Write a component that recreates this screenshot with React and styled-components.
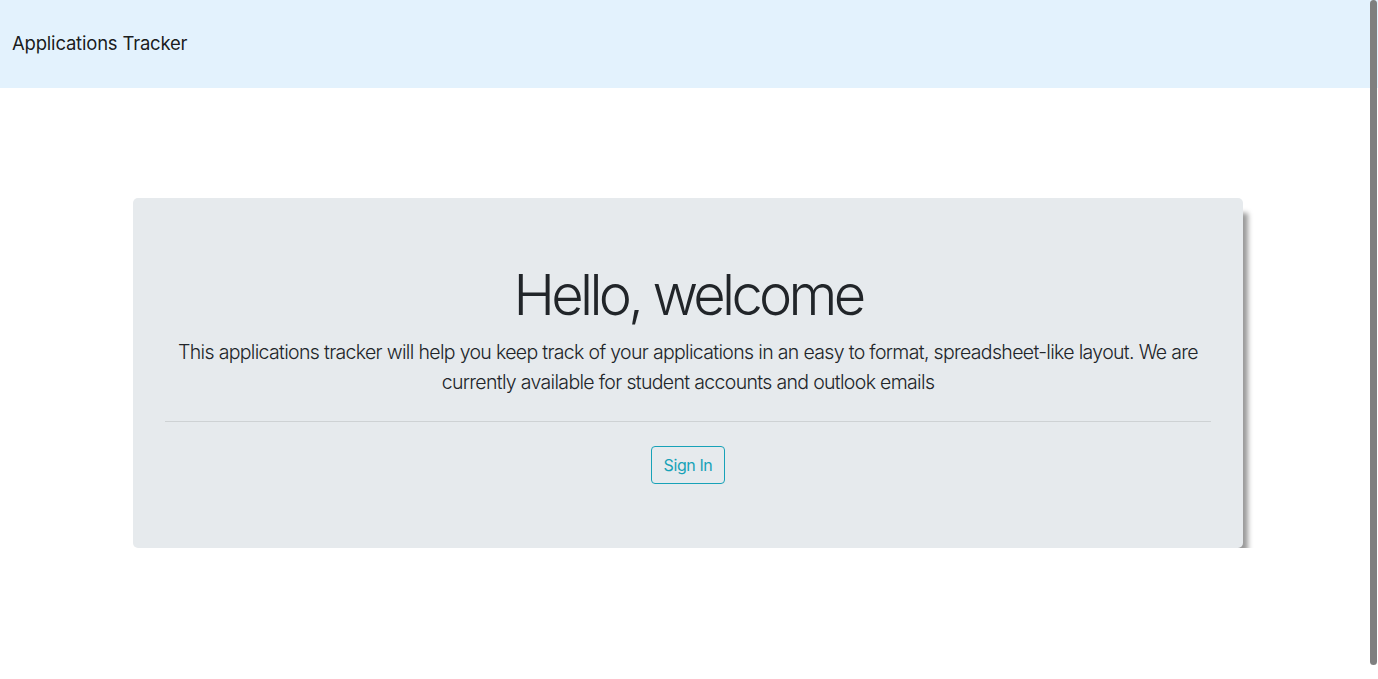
import styled, { createGlobalStyle } from 'styled-components'

export default function App() {
  return (
    <>
      <GlobalStyle />
      <NavBar>
        <Brand href="#">Applications Tracker</Brand>
      </NavBar>

      <Container>
        <Jumbotron>
          <Title>Hello, welcome</Title>
          <Lead>
            This applications tracker will help you keep track of your applications in an easy to
            format, spreadsheet-like layout. We are currently available for student accounts and
            outlook emails
          </Lead>
          <Divider />
          <OutlineButton type="button">Sign In</OutlineButton>
        </Jumbotron>
      </Container>

      <ScrollThumb />
    </>
  )
}

const GlobalStyle = createGlobalStyle`
  html, body {
    margin: 0;
    padding: 0;
    background: #fff;
    overflow: hidden;
  }
  body {
    font-family: Inter, "Noto Sans", "Liberation Sans", sans-serif;
    color: #212529;
  }
  * {
    box-sizing: border-box;
  }
`

const NavBar = styled.nav`
  height: 88px;
  background: #e3f2fd;
  display: flex;
  align-items: center;
  padding: 0 12px;
`

const Brand = styled.a`
  font-size: 18.5px;
  letter-spacing: -0.2px;
  color: rgba(0, 0, 0, 0.9);
  text-decoration: none;
  line-height: 30px;
  padding-bottom: 2px;
`

const Container = styled.main`
  max-width: 1140px;
  margin: 110px auto 0;
  padding: 0 16px 0 14px;
`

const Jumbotron = styled.section`
  background: #e6eaed;
  border-radius: 5px;
  padding: 64px 32px;
  text-align: center;
  box-shadow: 10px 10px 5px -5px rgba(0, 0, 0, 0.4);
`

const Title = styled.h1`
  margin: 0 0 8px;
  font-size: 56px;
  font-weight: 300;
  line-height: 67px;
  letter-spacing: -3.7px;
  color: #212529;
`

const Lead = styled.p`
  margin: 0;
  font-size: 19.5px;
  font-weight: 300;
  line-height: 30px;
  letter-spacing: -0.67px;
  color: #212529;
`

const Divider = styled.hr`
  margin: 24px 0;
  border: 0;
  border-top: 1px solid rgba(0, 0, 0, 0.1);
`

const OutlineButton = styled.button`
  font-family: inherit;
  font-size: 16px;
  line-height: 24px;
  letter-spacing: -0.4px;
  padding: 6px 12px;
  color: #17a2b8;
  background: transparent;
  border: 1px solid #17a2b8;
  border-radius: 4px;
  cursor: pointer;
`

const ScrollThumb = styled.div`
  position: fixed;
  top: 0;
  right: 1px;
  width: 7px;
  height: 665px;
  border-radius: 4px;
  background: #7f7f7f;
`
